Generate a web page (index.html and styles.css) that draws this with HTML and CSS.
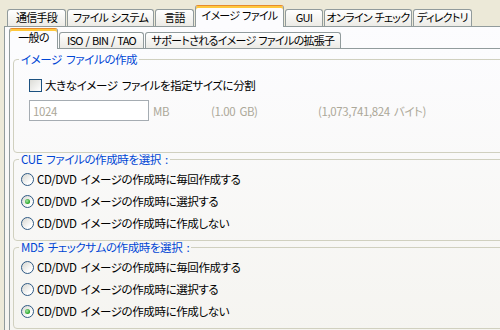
FILE: index.html
```html
<!DOCTYPE html>
<html lang="ja">
<head>
<meta charset="utf-8">
<link rel="stylesheet" href="styles.css">
</head>
<body>
<div class="window">
  <div class="tabs outer-tabs">
    <div class="tab w-comm">通信手段</div>
    <div class="tab w-fs">ファイル システム</div>
    <div class="tab w-lang">言語</div>
    <div class="tab active w-image">イメージ ファイル</div>
    <div class="tab w-gui">GUI</div>
    <div class="tab w-online">オンライン チェック</div>
    <div class="tab w-dir">ディレクトリ</div>
  </div>
  <div class="page outer-page">
    <div class="tabs inner-tabs">
      <div class="tab active w-general">一般の</div>
      <div class="tab w-iso">ISO / BIN / TAO</div>
      <div class="tab w-ext">サポートされるイメージ ファイルの拡張子</div>
    </div>
    <div class="page inner-page">
      <fieldset class="group">
        <legend>イメージ ファイルの作成</legend>
        <div class="group-body create-body">
          <label class="row check-row"><span class="checkbox"></span><span>大きなイメージ ファイルを指定サイズに分割</span></label>
          <div class="size-row">
            <div class="input">1024</div>
            <span class="unit">MB</span>
            <span class="gb">(1.00 GB)</span>
            <span class="bytes">(1,073,741,824 バイト)</span>
          </div>
        </div>
      </fieldset>
      <fieldset class="group">
        <legend>CUE ファイルの作成時を選択 :</legend>
        <div class="group-body radio-body">
          <label class="row"><span class="radio"></span><span>CD/DVD イメージの作成時に毎回作成する</span></label>
          <label class="row"><span class="radio checked"></span><span>CD/DVD イメージの作成時に選択する</span></label>
          <label class="row"><span class="radio"></span><span>CD/DVD イメージの作成時に作成しない</span></label>
        </div>
      </fieldset>
      <fieldset class="group">
        <legend>MD5 チェックサムの作成時を選択 :</legend>
        <div class="group-body radio-body">
          <label class="row"><span class="radio"></span><span>CD/DVD イメージの作成時に毎回作成する</span></label>
          <label class="row"><span class="radio"></span><span>CD/DVD イメージの作成時に選択する</span></label>
          <label class="row"><span class="radio checked"></span><span>CD/DVD イメージの作成時に作成しない</span></label>
        </div>
      </fieldset>
    </div>
  </div>
</div>
</body>
</html>
```

FILE: styles.css
```css
* {
  box-sizing: border-box;
}

html, body {
  margin: 0;
  width: 500px;
  height: 330px;
  overflow: hidden;
}

body {
  background: #ECE9D8;
  font-family: "Noto Sans CJK JP", sans-serif;
  font-size: 11.5px;
  letter-spacing: -0.4px;
  word-spacing: 2px;
  line-height: 14px;
  color: #000;
  font-feature-settings: "palt";
}

.window {
  padding-left: 4px;
  width: 640px;
}

.tabs {
  display: flex;
  align-items: flex-end;
  padding-left: 3px;
}

.outer-tabs {
  padding-top: 5px;
}

.tab {
  height: 17px;
  padding: 0;
  border: 1px solid #919B9C;
  border-bottom: none;
  border-radius: 3px 3px 0 0;
  background: linear-gradient(#FFFFFF, #ECEBE6);
  margin-right: 1px;
  white-space: nowrap;
  font-size: 11px;
  line-height: 15px;
  text-align: center;
  letter-spacing: -0.7px;
  word-spacing: 1px;
  flex: none;
}

.tab.active {
  height: 22px;
  margin-bottom: -1px;
  padding-top: 2px;
  background: #FCFCFE;
  border-top-color: #E68B2C;
  box-shadow: inset 0 2px 0 #FFC83C;
  position: relative;
  z-index: 1;
}

.w-comm { width: 59px; }
.w-fs { width: 87px; }
.w-lang { width: 39px; }
.w-image { width: 89px; }
.w-gui { width: 38px; }
.w-online { width: 88px; }
.w-dir { width: 59px; }
.w-general { width: 49px; }
.w-iso { width: 85px; }
.w-ext { width: 196px; }

.page {
  border: 1px solid #919B9C;
  background: linear-gradient(#FCFCFE, #F4F3EE 330px);
}

.outer-page {
  height: 340px;
  padding-left: 4px;
  border-right: none;
  border-bottom: none;
}

.inner-tabs {
  padding-top: 1px;
  padding-left: 0;
}

.inner-tabs .tab {
  height: 16px;
}

.inner-tabs .tab.active {
  height: 21px;
  padding-top: 1px;
}

.inner-page {
  height: 300px;
  padding: 4px 0 0 3px;
  border-right: none;
  border-bottom: none;
}

.group {
  margin: 0;
  padding: 0;
  border: 1px solid #D0D0BF;
  border-radius: 4px;
  min-width: 0;
}

.group legend {
  margin-left: 5px;
  padding: 0 2px;
  color: #0046D5;
  line-height: 12px;
}

.group-body {
  display: flex;
  flex-direction: column;
}

.create-body {
  padding: 9px 0 31px 15px;
}

.radio-body {
  padding: 3px 0 6px 7px;
}

.row {
  display: flex;
  align-items: center;
  gap: 3px;
  height: 22px;
  white-space: nowrap;
}

.checkbox {
  width: 13px;
  height: 13px;
  border: 1px solid #1C5180;
  background: linear-gradient(135deg, #DCDCD7, #FFFFFF);
  flex: none;
}

.radio {
  width: 13px;
  height: 13px;
  border-radius: 50%;
  border: 1px solid #2F5A84;
  background: linear-gradient(135deg, #D6D6D0, #FFFFFF 75%);
  flex: none;
  display: flex;
  align-items: center;
  justify-content: center;
}

.radio.checked::after {
  content: "";
  width: 5px;
  height: 5px;
  border-radius: 50%;
  background: radial-gradient(circle at 40% 40%, #A8E8A8, #21A121 70%);
}

.size-row {
  display: flex;
  align-items: center;
  margin-top: 4px;
  color: #ACA899;
  white-space: nowrap;
}

.input {
  width: 120px;
  height: 21px;
  border: 1px solid #A5ACB2;
  background: #FFFFFF;
  padding: 3px 0 0 3px;
  line-height: 14px;
}

.unit {
  width: 62px;
  padding-left: 4px;
}

.gb {
  width: 107px;
}
```
